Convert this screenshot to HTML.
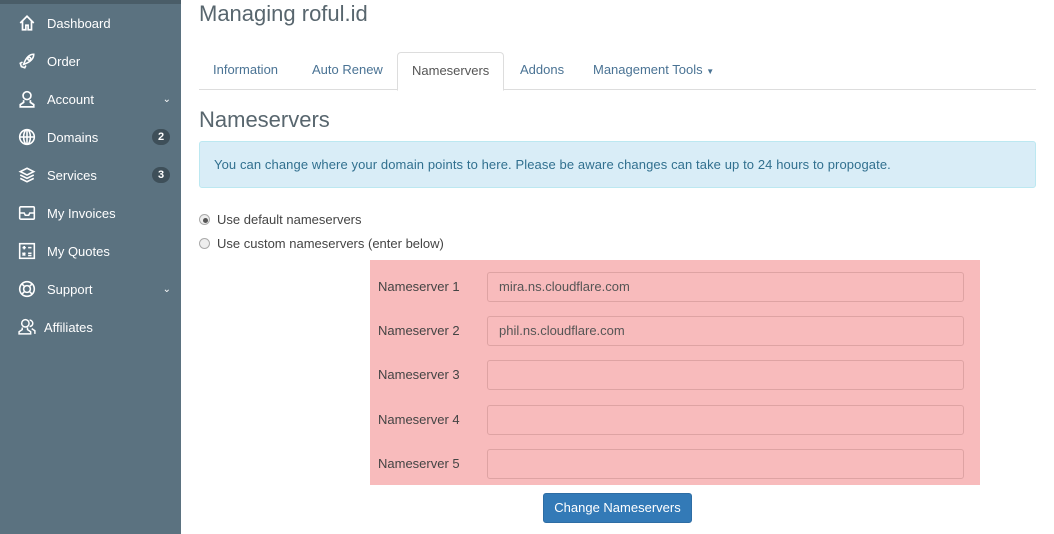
<!DOCTYPE html><html><head><style>
*{box-sizing:border-box}body{margin:0;width:1054px;height:534px;overflow:hidden;font-family:"Liberation Sans",sans-serif;background:#fff;position:relative}
.sb{position:absolute;left:0;top:0;width:181px;height:534px;background:#5b7280}
.sb .top{height:4px;background:#4a5d68}
.it{position:absolute;left:0;height:38px;width:181px;color:#fff;font-size:13px;display:flex;align-items:center}
.it svg{position:absolute;left:18px;top:10px}
.it span.l{position:absolute;left:47px}
.badge{position:absolute;right:11px;width:18px;height:16px;border-radius:8px;background:#3e4f59;font-size:11px;font-weight:bold;text-align:center;line-height:16px}
.chev{position:absolute;right:10px;font-size:10px}
.m{position:absolute;left:199px;color:#58666e}
.tabs{position:absolute;left:199px;top:52px;width:837px;height:38px;border-bottom:1px solid #ddd}
.tab{position:absolute;top:0;height:38px;line-height:36px;font-size:13px;color:#4a7394}
.act{border:1px solid #ddd;border-bottom:1px solid #fff;border-radius:4px 4px 0 0;background:#fff;color:#555;height:39px;padding:0 14px}
.alert{position:absolute;left:199px;top:141px;width:837px;height:47px;background:#d9edf7;border:1px solid #bce8f1;border-radius:3px;color:#31708f;font-size:13px;line-height:45px;padding-left:14px;letter-spacing:0.1px}
.r{position:absolute;left:199px;font-size:13px;color:#444}
.r i{display:inline-block;width:11px;height:11px;border:1px solid #aaa;border-radius:50%;background:#eee;vertical-align:-1px;margin-right:7px;position:relative}
.pk{position:absolute;left:370px;top:260px;width:610px;height:225px;background:#f8bbbc}
.lbl{position:absolute;left:8px;font-size:13px;color:#444}
.in{position:absolute;left:117px;width:477px;height:30px;border:1px solid #dea3a3;border-radius:3px;font-size:13px;color:#555;line-height:28px;padding-left:11px}
.btn{position:absolute;left:543px;top:493px;width:149px;height:30px;background:#337ab7;border:1px solid #2e6da4;border-radius:3px;color:#fff;font-size:13px;text-align:center;line-height:28px}
</style></head><body>
<div class="sb"><div class="top"></div>
<div class="it" style="top:4px"><svg width="18" height="18" viewBox="0 0 16 16" fill="none" stroke="#fff" stroke-width="1.5"><path d="M2 8L8 2l6 6M4 6v8h3v-4h2v4h3V6"/></svg><span class="l">Dashboard</span></div>
<div class="it" style="top:42px"><svg width="18" height="18" viewBox="0 0 16 16" fill="none" stroke="#fff" stroke-width="1.4"><path d="M5 11C7 5 10 2 14 2c0 4-3 7-9 9zM4 9L2 10l1 3 3 1 1-2"/><circle cx="10" cy="6" r="1.3"/></svg><span class="l">Order</span></div>
<div class="it" style="top:80px"><svg width="18" height="18" viewBox="0 0 16 16" fill="none" stroke="#fff" stroke-width="1.5"><circle cx="8" cy="5" r="3.5"/><path d="M5 9v2l-3 2v2h12v-2l-3-2V9"/></svg><span class="l">Account</span><span class="chev">⌄</span></div>
<div class="it" style="top:118px"><svg width="18" height="18" viewBox="0 0 16 16" fill="none" stroke="#fff" stroke-width="1.4"><circle cx="8" cy="8" r="6.5"/><ellipse cx="8" cy="8" rx="3" ry="6.5"/><path d="M1.5 8h13M8 1.5v13"/></svg><span class="l">Domains</span><span class="badge">2</span></div>
<div class="it" style="top:156px"><svg width="18" height="18" viewBox="0 0 16 16" fill="none" stroke="#fff" stroke-width="1.4"><path d="M8 2l6 3-6 3-6-3zM2 8l6 3 6-3M2 11l6 3 6-3"/></svg><span class="l">Services</span><span class="badge">3</span></div>
<div class="it" style="top:194px"><svg width="18" height="18" viewBox="0 0 16 16" fill="none" stroke="#fff" stroke-width="1.4"><rect x="1.5" y="2.5" width="13" height="11" rx="1"/><path d="M1.5 8h4l1 2h3l1-2h4"/></svg><span class="l">My Invoices</span></div>
<div class="it" style="top:232px"><svg width="18" height="18" viewBox="0 0 16 16" fill="none" stroke="#fff" stroke-width="1.4"><rect x="1.5" y="1.5" width="13" height="13"/><path d="M4 5h3M5.5 3.5v3M9 5h3M4 9.5l2.5 2.5M6.5 9.5L4 12M9 10h3M9 12h3"/></svg><span class="l">My Quotes</span></div>
<div class="it" style="top:270px"><svg width="18" height="18" viewBox="0 0 16 16" fill="none" stroke="#fff" stroke-width="1.4"><circle cx="8" cy="8" r="6.5"/><circle cx="8" cy="8" r="3"/><path d="M3.5 3.5l2.5 2.5M12.5 3.5L10 6M3.5 12.5L6 10M12.5 12.5L10 10"/></svg><span class="l">Support</span><span class="chev">⌄</span></div>
<div class="it" style="top:308px"><svg width="19" height="17" viewBox="0 0 18 16" fill="none" stroke="#fff" stroke-width="1.4"><circle cx="7" cy="5" r="3.5"/><path d="M4 9v2l-3 2v2h11v-2l-3-2V9M11 2a3 3 0 010 6M13 10l3 2v3"/></svg><span class="l" style="left:44px">Affiliates</span></div>
</div>
<div class="m" style="top:0;font-size:22px;line-height:28px">Managing roful.id</div>
<div class="tabs">
<div class="tab" style="left:14px">Information</div>
<div class="tab" style="left:113px">Auto Renew</div>
<div class="tab act" style="left:198px">Nameservers</div>
<div class="tab" style="left:321px">Addons</div>
<div class="tab" style="left:394px">Management Tools <span style="font-size:8px">▼</span></div>
</div>
<div class="m" style="top:106px;font-size:22px;line-height:28px">Nameservers</div>
<div class="alert">You can change where your domain points to here. Please be aware changes can take up to 24 hours to propogate.</div>
<div class="r" style="top:212px"><i><b style="position:absolute;left:3px;top:3px;width:5px;height:5px;border-radius:50%;background:#555"></b></i>Use default nameservers</div>
<div class="r" style="top:236px"><i></i>Use custom nameservers (enter below)</div>
<div class="pk">
<div class="lbl" style="top:19px">Nameserver 1</div><div class="in" style="top:12px">mira.ns.cloudflare.com</div>
<div class="lbl" style="top:63px">Nameserver 2</div><div class="in" style="top:56px">phil.ns.cloudflare.com</div>
<div class="lbl" style="top:107px">Nameserver 3</div><div class="in" style="top:100px"></div>
<div class="lbl" style="top:152px">Nameserver 4</div><div class="in" style="top:145px"></div>
<div class="lbl" style="top:196px">Nameserver 5</div><div class="in" style="top:189px"></div>
</div>
<div class="btn">Change Nameservers</div>
</body></html>
